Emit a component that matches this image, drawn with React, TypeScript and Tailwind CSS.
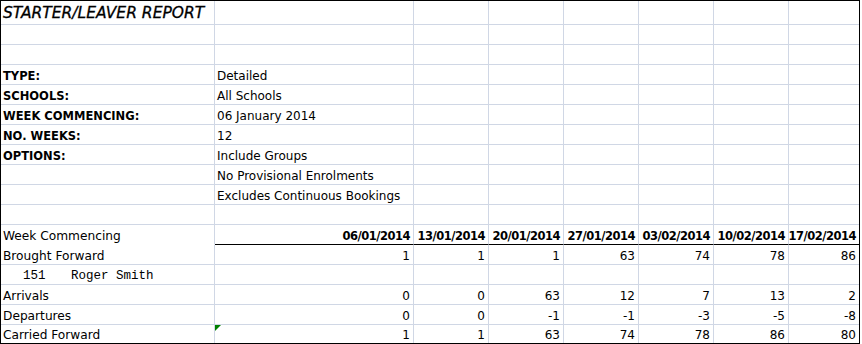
import React from "react";

const dates = ["06/01/2014", "13/01/2014", "20/01/2014", "27/01/2014", "03/02/2014", "10/02/2014", "17/02/2014"];

type Row = {
  a?: React.ReactNode;
  aKind?: "title" | "bold" | "normal" | "mono";
  b?: string;
  nums?: (string | number)[];
  header?: boolean;
  flag?: boolean;
};

const rows: Row[] = [
  { a: "STARTER/LEAVER REPORT", aKind: "title" },
  {},
  {},
  { a: "TYPE:", aKind: "bold", b: "Detailed" },
  { a: "SCHOOLS:", aKind: "bold", b: "All Schools" },
  { a: "WEEK COMMENCING:", aKind: "bold", b: "06 January 2014" },
  { a: "NO. WEEKS:", aKind: "bold", b: "12" },
  { a: "OPTIONS:", aKind: "bold", b: "Include Groups" },
  { b: "No Provisional Enrolments" },
  { b: "Excludes Continuous Bookings" },
  {},
  { a: "Week Commencing", aKind: "normal", header: true },
  { a: "Brought Forward", aKind: "normal", nums: [1, 1, 1, 63, 74, 78, 86] },
  { a: "151", aKind: "mono" },
  { a: "Arrivals", aKind: "normal", nums: [0, 0, 63, 12, 7, 13, 2] },
  { a: "Departures", aKind: "normal", nums: [0, 0, -1, -1, -3, -5, -8] },
  { a: "Carried Forward", aKind: "normal", nums: [1, 1, 63, 74, 78, 86, 80], flag: true },
];

const font = { fontFamily: '"DejaVu Sans", Verdana, sans-serif' };

export default function App() {
  const cells: React.ReactNode[] = [];
  rows.forEach((r, ri) => {
    const last = ri === rows.length - 1;
    let aContent: React.ReactNode = null;
    if (r.aKind === "title") {
      aContent = <span className="italic text-[15.5px] leading-[18px] pb-[2px] pl-[2px] whitespace-nowrap [-webkit-text-stroke:0.3px_black]">{r.a}</span>;
    } else if (r.aKind === "bold") {
      aContent = <span className="font-bold text-[11.5px] leading-[14px] pb-px pl-[2px] whitespace-nowrap">{r.a}</span>;
    } else if (r.aKind === "normal") {
      aContent = <span className="text-[12.2px] leading-[14px] pb-px pl-[2px] whitespace-nowrap">{r.a}</span>;
    } else if (r.aKind === "mono") {
      aContent = (
        <span className="flex text-[12.5px] leading-[14px] pb-px pl-[2px] whitespace-nowrap" style={{ fontFamily: '"Liberation Mono", "Courier New", monospace' }}>
          <span className="w-[68px] pl-[20px]">151</span>
          <span>Roger Smith</span>
        </span>
      );
    }
    cells.push(
      <div
        key={`a${ri}`}
        className={
          last
            ? "flex items-end border-r border-[#d0d7e5]"
            : r.header
            ? "flex items-end border-r border-b border-r-[#d0d7e5] border-b-white"
            : "flex items-end border-r border-b border-[#d0d7e5]"
        }
      >
        {aContent}
      </div>
    );
    for (let ci = 0; ci < 7; ci++) {
      const isLastCol = ci === 6;
      let content: React.ReactNode = null;
      let justify = "justify-start";
      if (ci === 0 && r.b) {
        content = <span className="text-[12px] leading-[14px] pb-px pl-[2px] whitespace-nowrap">{r.b}</span>;
      } else if (r.header) {
        content = (
          <span className="font-bold text-[11.5px] tracking-[-0.5px] leading-[14px] pb-px pr-[3px] whitespace-nowrap">
            {dates[ci]}
          </span>
        );
        justify = "justify-end";
      } else if (r.nums) {
        content = <span className="text-[12px] leading-[14px] pb-px pr-[3px] whitespace-nowrap">{r.nums[ci]}</span>;
        justify = "justify-end";
      }
      let cls: string;
      if (last) {
        cls = isLastCol ? "relative flex items-end" : "relative flex items-end border-r border-[#d0d7e5]";
      } else if (r.header) {
        cls = isLastCol
          ? "relative flex items-end border-b border-b-black"
          : "relative flex items-end border-r border-b border-r-[#d0d7e5] border-b-black";
      } else {
        cls = isLastCol
          ? "relative flex items-end border-b border-[#d0d7e5]"
          : "relative flex items-end border-r border-b border-[#d0d7e5]";
      }
      cells.push(
        <div key={`c${ri}-${ci}`} className={`${cls} ${justify}`}>
          {r.flag && ci === 0 && (
            <svg className="absolute left-0 top-0" width="6" height="6" viewBox="0 0 6 6">
              <polygon points="0,0 6,0 0,6" fill="#008000" />
            </svg>
          )}
          {content}
        </div>
      );
    }
  });

  return (
    <div className="w-[862px] h-[344px] bg-white text-black" style={font}>
      <div className="w-[860px] h-[344px] border border-black grid grid-cols-[214px_199px_75px_75px_75px_75px_75px_70px] grid-rows-[24px_repeat(15,20px)_18px] overflow-hidden">
        {cells}
      </div>
    </div>
  );
}
